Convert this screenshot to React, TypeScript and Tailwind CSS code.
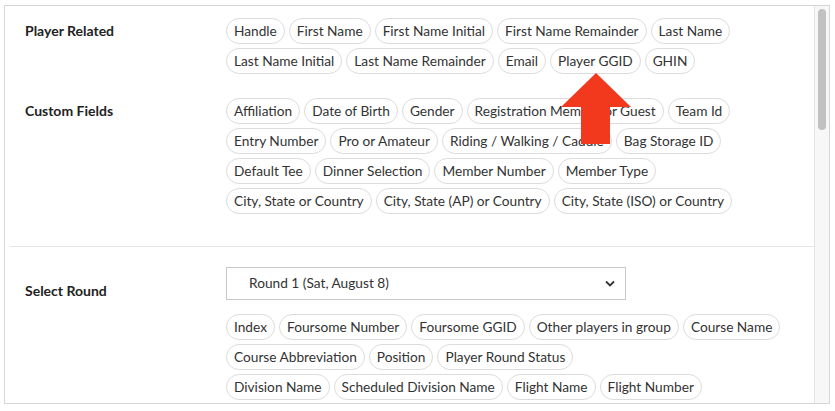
import React from "react";

const playerRows = [
  ["Handle", "First Name", "First Name Initial", "First Name Remainder", "Last Name"],
  ["Last Name Initial", "Last Name Remainder", "Email", "Player GGID", "GHIN"],
];

const customRows = [
  ["Affiliation", "Date of Birth", "Gender", "Registration Member or Guest", "Team Id"],
  ["Entry Number", "Pro or Amateur", "Riding / Walking / Caddie", "Bag Storage ID"],
  ["Default Tee", "Dinner Selection", "Member Number", "Member Type"],
  ["City, State or Country", "City, State (AP) or Country", "City, State (ISO) or Country"],
];

const roundRows = [
  ["Index", "Foursome Number", "Foursome GGID", "Other players in group", "Course Name"],
  ["Course Abbreviation", "Position", "Player Round Status"],
  ["Division Name", "Scheduled Division Name", "Flight Name", "Flight Number"],
];

const Chip = ({ label }: { label: string }) => (
  <span className="h-[26px] px-[7px] flex items-center rounded-full border border-[#dcdcdc] bg-white text-[13.7px] text-[#333] whitespace-nowrap">
    {label}
  </span>
);

const ChipRows = ({ rows }: { rows: string[][] }) => (
  <div className="flex flex-col gap-1">
    {rows.map((row, i) => (
      <div key={i} className="flex gap-1">
        {row.map((c) => (
          <Chip key={c} label={c} />
        ))}
      </div>
    ))}
  </div>
);

const Section = ({ title, rows }: { title: string; rows: string[][] }) => (
  <div className="flex">
    <div className="w-[201px] shrink-0 pt-[2px] text-[14px] font-bold text-[#222]">
      {title}
    </div>
    <ChipRows rows={rows} />
  </div>
);

const App = () => {
  return (
    <div
      className="relative w-[835px] h-[411px] bg-white pt-[5px] pl-[4px]"
      style={{ fontFamily: "Lato, 'Open Sans', sans-serif" }}
    >
      <div className="w-[826px] h-[399px] border border-[#d6d6d6] flex overflow-hidden">
        <div className="flex-1 flex flex-col pt-[12px]">
          <div className="pl-[20px] flex flex-col gap-[24px]">
            <Section title="Player Related" rows={playerRows} />
            <Section title="Custom Fields" rows={customRows} />
          </div>
          <div className="ml-[5px] mt-[32px] border-t border-[#e6e6e6]" />
          <div className="pl-[20px] pt-[20px] flex">
            <div className="w-[201px] shrink-0 pt-[13px] text-[14px] font-bold text-[#222]">
              Select Round
            </div>
            <div className="flex flex-col gap-[14px]">
              <div className="w-[400px] h-[33px] border border-[#c9c9c9] flex items-center justify-between pl-[22px] pr-[10px] text-[13.7px] text-[#333]">
                <span>Round 1 (Sat, August 8)</span>
                <svg width="10" height="7" viewBox="0 0 10 7">
                  <path d="M1 1.5 L5 5.5 L9 1.5" fill="none" stroke="#333" strokeWidth="1.8" />
                </svg>
              </div>
              <ChipRows rows={roundRows} />
            </div>
          </div>
        </div>
        <div className="w-[15px] shrink-0 bg-[#f7f7f7] border-l border-[#e4e4e4] pt-[3px] flex justify-center">
          <div className="w-[8px] h-[121px] rounded-full bg-[#c1c1c1]" />
        </div>
      </div>
      <svg
        className="absolute left-[558px] top-[70px]"
        width="76"
        height="76"
        viewBox="0 0 76 76"
      >
        <polygon
          points="38,3 73,37 52,37 52,74 23,74 23,37 3,37"
          fill="#f2381d"
        />
      </svg>
    </div>
  );
};

export default App;
